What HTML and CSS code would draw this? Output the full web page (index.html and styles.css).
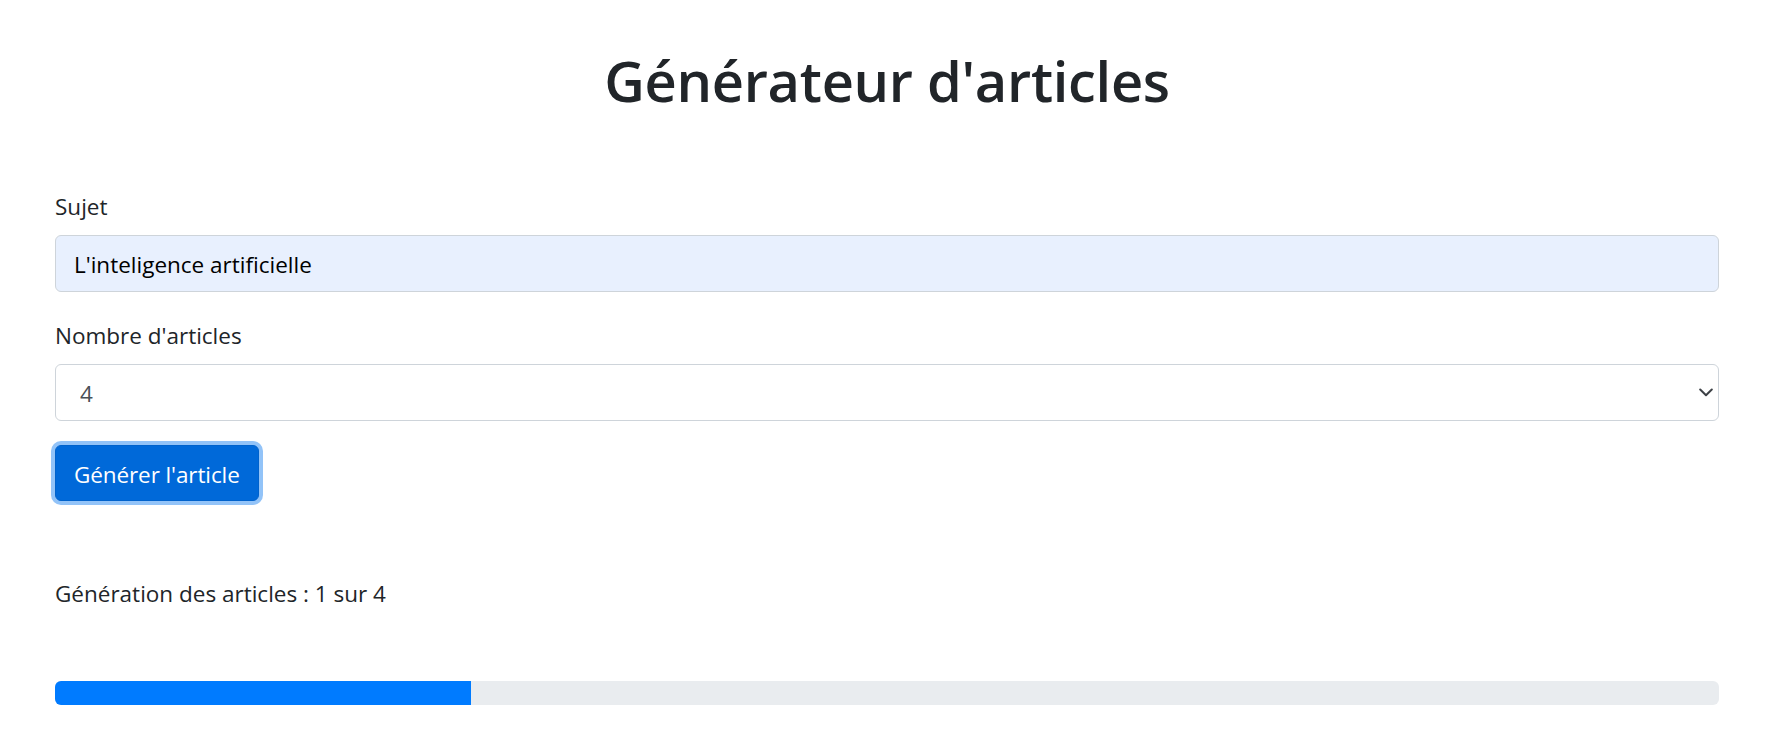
FILE: index.html
```html
<!DOCTYPE html>
<html lang="fr">
<head>
<meta charset="utf-8">
<title>Générateur d'articles</title>
<link rel="stylesheet" href="styles.css">
</head>
<body>
<main class="container">
  <h1 class="title">Générateur d'articles</h1>
  <form class="form">
    <div class="group">
      <label class="label" for="sujet">Sujet</label>
      <input class="control control-autofill" id="sujet" type="text" value="L'inteligence artificielle">
    </div>
    <div class="group">
      <label class="label" for="nombre">Nombre d'articles</label>
      <div class="select-wrap">
        <select class="control select" id="nombre">
          <option>1</option>
          <option>2</option>
          <option>3</option>
          <option selected>4</option>
          <option>5</option>
        </select>
        <svg class="chevron" width="14" height="9" viewBox="0 0 14 9" aria-hidden="true">
          <path d="M1.2 1.5 L7 7.2 L12.8 1.5" fill="none" stroke="#3d4146" stroke-width="2" stroke-linecap="round" stroke-linejoin="round"/>
        </svg>
      </div>
    </div>
    <button class="btn" type="button">Générer l'article</button>
  </form>
  <p class="status">Génération des articles : 1 sur 4</p>
  <div class="progress"><div class="progress-bar" style="width:25%"></div></div>
</main>
</body>
</html>
```
FILE: styles.css
```css
* { box-sizing: border-box; }
html, body { margin: 0; padding: 0; background: #fff; }
body {
  font-family: "Open Sans", "Noto Sans", sans-serif;
  color: #212529;
  font-size: 22.5px;
  line-height: 36px;
}
.container {
  padding: 44px 57px 0 55px;
}
.title {
  margin: 0 0 71px;
  font-size: 56px;
  line-height: 72px;
  font-weight: 600;
  letter-spacing: -0.3px;
  text-align: center;
  color: #212529;
}
.form { display: flex; flex-direction: column; align-items: flex-start; }
.group { width: 100%; margin-bottom: 24px; display: flex; flex-direction: column; }
.label { display: block; margin-bottom: 12px; height: 36px; padding-top: 2px; }
.control {
  display: block;
  width: 100%;
  height: 57px;
  padding: 2px 18px 0;
  font-family: inherit;
  font-size: 22.5px;
  border: 1.5px solid #ced4da;
  border-radius: 6px;
  background: #fff;
  color: #495057;
  outline: none;
}
.control-autofill { background: #e8f0fe; color: #000; }
.select-wrap { position: relative; width: 100%; }
.select {
  appearance: none;
  -webkit-appearance: none;
  padding-left: 24px;
  color: #495057;
}
.chevron {
  position: absolute;
  right: 6px;
  top: 24px;
  pointer-events: none;
}
.btn {
  height: 56px;
  padding: 2px 18px 0;
  font-family: inherit;
  font-size: 22.5px;
  letter-spacing: -0.1px;
  color: #fff;
  background: #0069d9;
  border: 1.5px solid #0062cc;
  border-radius: 6px;
  box-shadow: 0 0 0 4px #92c3f8;
  cursor: pointer;
}
.status { margin: 73px 0 71px; height: 36px; padding-top: 2px; }
.progress {
  height: 24px;
  background: #e9ecef;
  border-radius: 6px;
  overflow: hidden;
  display: flex;
}
.progress-bar { background: #007bff; height: 100%; }
```
